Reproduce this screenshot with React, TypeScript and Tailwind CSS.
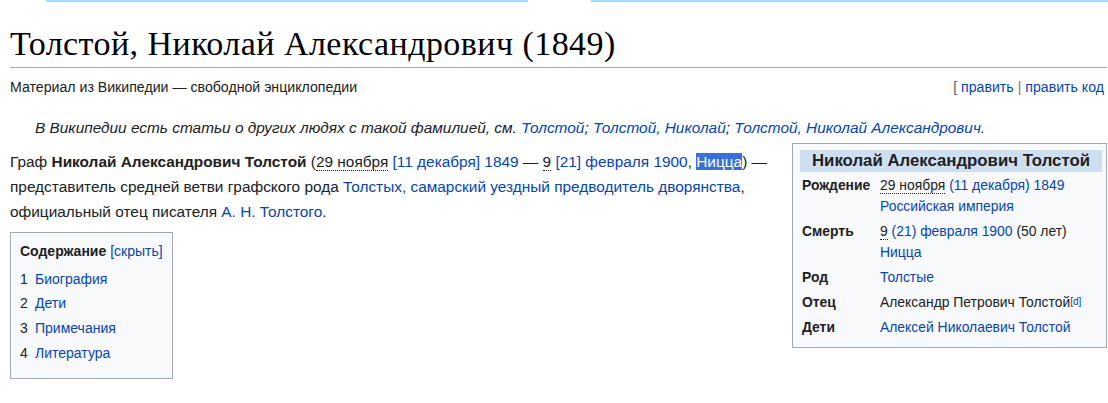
import React from "react";

const link = "text-[#0645ad]";
const dotted = "border-b border-dotted border-[#202122]";

function Tabs() {
  // bottom edges of the skin's tab bar, only they are visible
  const seg = "h-[2px] border-l border-[#a7d7f9] border-b-2";
  return (
    <div className="flex h-[2px]">
      <div className="w-[46px]" />
      <div className={`${seg} w-[101px]`} />
      <div className={`${seg} w-[381px] border-r`} />
      <div className="w-[63px]" />
      <div className={`${seg} w-[74px]`} />
      <div className={`${seg} w-[99px]`} />
      <div className={`${seg} w-[73px]`} />
      <div className={`${seg} flex-1`} />
    </div>
  );
}

function Infobox() {
  const rows: [string, React.ReactNode][] = [
    [
      "Рождение",
      <>
        <span className={dotted}>29 ноября</span>{" "}
        <span className={link}>(11 декабря) 1849</span>
        <br />
        <span className={link}>Российская империя</span>
      </>,
    ],
    [
      "Смерть",
      <>
        <span className={dotted}>9</span>{" "}
        <span className={link}>(21) февраля 1900</span> (50 лет)
        <br />
        <span className={link}>Ницца</span>
      </>,
    ],
    ["Род", <span className={link}>Толстые</span>],
    [
      "Отец",
      <>
        Александр Петрович Толстой
        <sup className={`${link} text-[10px] relative -top-[2px]`}>[d]</sup>
      </>,
    ],
    ["Дети", <span className={link}>Алексей Николаевич Толстой</span>],
  ];
  return (
    <div className="w-[315px] shrink-0 border border-[#a2a9b1] bg-[#f8f9fa] pl-[7px] pr-[4px] pt-[6px] pb-[9px] text-[13.9px] leading-[21px]">
      <div className="bg-[#cedff2] text-center text-[16.8px] font-bold leading-[22px]">
        Николай Александрович Толстой
      </div>
      <div className="mt-[3px] flex flex-col gap-[4px] pl-[2px]">
        {rows.map(([k, v]) => (
          <div key={k} className="flex">
            <div className="w-[78px] shrink-0 font-bold">{k}</div>
            <div>{v}</div>
          </div>
        ))}
      </div>
    </div>
  );
}

function Toc() {
  const items = ["Биография", "Дети", "Примечания", "Литература"];
  return (
    <div className="mt-[8px] inline-block border border-[#a2a9b1] bg-[#f8f9fa] px-[9px] pt-[7px] pb-[13px] text-[14px]">
      <div className="mb-[5px] leading-[22px]">
        <b>Содержание</b> <span className={link}>[скрыть]</span>
      </div>
      {items.map((t, i) => (
        <div key={t} className="flex leading-[24.7px]">
          <span className="w-[15px]">{i + 1}</span>
          <span className={link}>{t}</span>
        </div>
      ))}
    </div>
  );
}

export default function App() {
  return (
    <div
      className="h-[403px] overflow-hidden bg-white text-[#202122]"
      style={{ fontFamily: '"Liberation Sans", Arial, sans-serif' }}
    >
      <Tabs />
      <div className="pl-[10px] pr-[1px]">
        <h1
          className="mt-[22px] border-b border-[#a2a9b1] pb-[3px] text-[34px] leading-[40px] tracking-[0.45px] text-black"
          style={{ fontFamily: '"Liberation Serif", "Times New Roman", serif' }}
        >
          Толстой, Николай Александрович (1849)
        </h1>
        <div className="mt-[11px] flex justify-between pr-[3px] text-[14.15px] leading-[16px]">
          <span>Материал из Википедии — свободной энциклопедии</span>
          <span>
            <span className="text-[#54595d]">[</span>{" "}
            <span className={link}>править</span>{" "}
            <span className="text-[#a0606e]">|</span>{" "}
            <span className={link}>править код</span>
          </span>
        </div>
        <div className="mt-[22px] pl-[25px] text-[15.4px] italic leading-[22px]">
          В Википедии есть статьи о других людях с такой фамилией, см.{" "}
          <span className={link}>Толстой</span>;{" "}
          <span className={link}>Толстой, Николай</span>;{" "}
          <span className={link}>Толстой, Николай Александрович</span>.
        </div>
        <div className="mt-[4px] flex items-start gap-[14px]">
          <div className="flex-1 pt-[5.5px]">
            <p className="text-[15.4px] leading-[25px]">
              Граф <b>Николай Александрович Толстой</b> (
              <span className={dotted}>29 ноября</span>{" "}
              <span className={link}>[11 декабря] 1849</span> —{" "}
              <span className={dotted}>9</span>{" "}
              <span className={link}>[21] февраля 1900</span>,{" "}
              <span className="bg-[#3a6fd8] text-white">Ницца</span>) —
              представитель средней ветви графского рода{" "}
              <span className={link}>
                Толстых, самарский уездный предводитель дворянства
              </span>
              , официальный отец писателя{" "}
              <span className={link}>А. Н. Толстого</span>.
            </p>
            <Toc />
          </div>
          <Infobox />
        </div>
      </div>
    </div>
  );
}
